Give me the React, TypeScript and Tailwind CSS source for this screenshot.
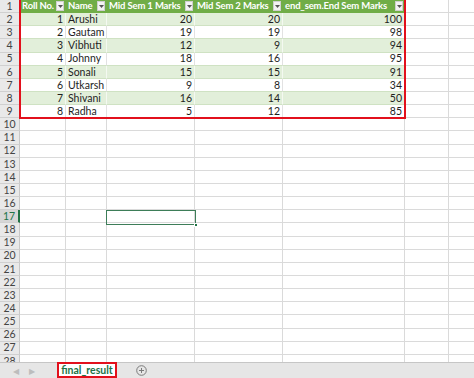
import React from "react";

const widths = [46, 41, 88, 88, 122, 44, 25];
const headers = ["Roll No.", "Name", "Mid Sem 1 Marks", "Mid Sem 2 Marks", "end_sem.End Sem Marks"];
const data: [number, string, number, number, number][] = [
  [1, "Arushi", 20, 20, 100],
  [2, "Gautam", 19, 19, 98],
  [3, "Vibhuti", 12, 9, 94],
  [4, "Johnny", 18, 16, 95],
  [5, "Sonali", 15, 15, 91],
  [6, "Utkarsh", 9, 8, 34],
  [7, "Shivani", 16, 14, 50],
  [8, "Radha", 5, 12, 85],
];

const font = { fontFamily: "Lato, 'Liberation Sans', sans-serif" };

function RowHead({ n, active }: { n: number; active?: boolean }) {
  return (
    <div
      className={
        "w-[20px] shrink-0 flex items-center justify-center text-[10.5px] leading-none border-b border-[#d0d0d0] " +
        (active
          ? "bg-[#d6d6d6] text-[#217346] border-r-2 border-r-[#217346]"
          : "bg-[#e9e9e9] text-[#444] border-r border-r-[#c8c8c8]")
      }
    >
      {n}
    </div>
  );
}

function Dropdown() {
  return (
    <div className="w-[8px] h-[10px] bg-[#f3f3f3] border border-[#cfcfcf] flex items-center justify-center shrink-0">
      <svg width="5" height="3" viewBox="0 0 5 3">
        <path d="M0 0 L5 0 L2.5 3 Z" fill="#555" />
      </svg>
    </div>
  );
}

export default function App() {
  const rows: React.ReactNode[] = [];
  rows.push(
    <div key="r1" className="flex h-[13.15px]">
      <RowHead n={1} />
      {headers.map((h, i) => (
        <div
          key={i}
          style={{ width: widths[i] }}
          className="shrink-0 bg-[#70ad47] flex items-center justify-between pl-[2px] pr-[2px] border-b border-[#70ad47]"
        >
          <span className="text-white font-bold text-[9.5px] tracking-[-0.15px] leading-[12px] whitespace-nowrap">{h}</span>
          <Dropdown />
        </div>
      ))}
      <div style={{ width: widths[5] }} className="shrink-0 border-r border-b border-[#dadada]" />
      <div style={{ width: widths[6] }} className="shrink-0 border-b border-[#dadada]" />
    </div>
  );
  data.forEach((d, ri) => {
    const green = ri % 2 === 0;
    const bg = green ? "bg-[#e2efda]" : "bg-white";
    rows.push(
      <div key={"d" + ri} className="flex h-[13.15px]">
        <RowHead n={ri + 2} />
        {d.map((v, ci) => (
          <div
            key={ci}
            style={{ width: widths[ci] }}
            className={
              "shrink-0 flex items-center px-[2px] text-[10.5px] leading-none text-[#1e1e1e] border-b border-b-[#cfe2c3] border-r " +
              (green ? "border-r-[#f4f9f1] " : "border-r-[#e2e2e2] ") +
              bg +
              (ci === 1 ? " justify-start" : " justify-end")
            }
          >
            {v}
          </div>
        ))}
        <div style={{ width: widths[5] }} className="shrink-0 border-r border-b border-[#dadada]" />
        <div style={{ width: widths[6] }} className="shrink-0 border-b border-[#dadada]" />
      </div>
    );
  });
  for (let n = 10; n <= 28; n++) {
    rows.push(
      <div key={"e" + n} className="flex h-[13.15px] shrink-0">
        <RowHead n={n} active={n === 17} />
        {widths.map((w, ci) => (
          <div
            key={ci}
            style={{ width: w }}
            className={"shrink-0 border-b border-[#dadada] " + (ci < widths.length - 1 ? "border-r" : "")}
          />
        ))}
      </div>
    );
  }

  return (
    <div className="w-[474px] h-[378px] overflow-hidden bg-white flex flex-col relative" style={font}>
      <div className="h-[362px] overflow-hidden relative shrink-0">
        {rows}
        <div className="absolute left-[19px] top-[-3px] w-[387px] h-[122px] border-[2.5px] border-[#e2101c]" />
        <div className="absolute left-[106px] top-[210px] w-[90px] h-[15px] border-[1.5px] border-[#3d7d58]">
          <div className="absolute right-[-3px] bottom-[-3px] w-[4px] h-[4px] bg-[#217346] border border-white" />
        </div>
      </div>
      <div className="flex-1 bg-[#e6e6e6] border-t border-[#c6c6c6] flex items-stretch relative">
        <div className="w-[57px] flex items-center gap-[10px] pl-[13px] text-[#bdbdbd] text-[8px]">
          <span>◀</span>
          <span>▶</span>
        </div>
        <div className="w-[60px] -mt-px bg-white border-2 border-[#e2101c] flex items-center justify-center">
          <span className="text-[#217346] font-bold text-[10.5px] leading-[12px]">final_result</span>
        </div>
        <div className="flex items-center pl-[19px]">
          <svg width="11" height="11" viewBox="0 0 11 11">
            <circle cx="5.5" cy="5.5" r="4.8" fill="none" stroke="#7a7a7a" strokeWidth="1" />
            <path d="M5.5 3 V8 M3 5.5 H8" stroke="#7a7a7a" strokeWidth="1" />
          </svg>
        </div>
      </div>
    </div>
  );
}
